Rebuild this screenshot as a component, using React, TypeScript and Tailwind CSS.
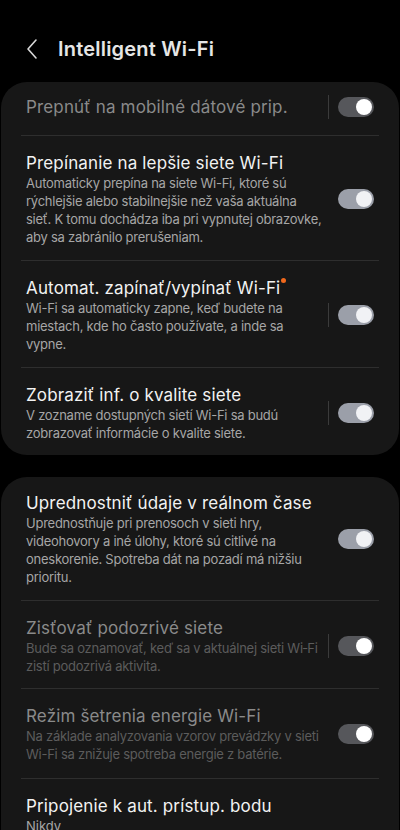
import React from "react";

type RowProps = {
  title: string;
  desc?: React.ReactNode;
  disabled?: boolean;
  toggle?: "on" | "dim" | "none";
  sep?: boolean;
  dot?: boolean;
  pt?: string;
  pb?: string;
  sub?: string;
};

function Toggle({ kind }: { kind: "on" | "dim" }) {
  return (
    <div
      className={
        "relative w-[36px] h-[20px] rounded-full " +
        (kind === "on" ? "bg-[#9b9fa9]" : "bg-[#56575b]")
      }
    >
      <div
        className={
          "absolute right-[2px] top-[2px] w-[16px] h-[16px] rounded-full " +
          (kind === "on" ? "bg-[#f1f2f5]" : "bg-white")
        }
      />
    </div>
  );
}

function Row({ title, desc, disabled, toggle = "none", sep, dot, pt = "pt-[16px]", pb = "pb-[14px]", sub }: RowProps) {
  return (
    <div className={"flex items-center pl-[25px] pr-[25px] " + pt + " " + pb}>
      <div className="flex-1 min-w-0 pr-[2px]">
        <div
          className={
            "text-[17px] leading-[22px] tracking-[0.15px] " +
            (disabled ? "text-[#8a8a8a]" : "text-[#f2f2f2]")
          }
        >
          {title}
          {dot && (
            <span className="inline-block w-[5px] h-[5px] rounded-full bg-[#f0681c] align-top ml-[1px] mt-[1px]" />
          )}
        </div>
        {desc && (
          <div
            className={
              "text-[13px] leading-[18px] tracking-[-0.25px] " +
              (disabled ? "text-[#5c5c5c]" : "text-[#a6a6a6]")
            }
          >
            {desc}
          </div>
        )}
        {sub && <div className="text-[13px] leading-[18px] text-[#a6a6a6]">{sub}</div>}
      </div>
      {toggle !== "none" && (
        <div className="flex items-center shrink-0">
          <div className={"w-px h-[24px] mr-[9px] " + (sep ? "bg-[#3b3b3b]" : "bg-transparent")} />
          <Toggle kind={toggle} />
        </div>
      )}
    </div>
  );
}

function Divider() {
  return <div className="mx-[20px] h-px bg-[#2e2e2e]" />;
}

export default function App() {
  return (
    <div
      className="w-[400px] h-[830px] bg-black overflow-hidden"
      style={{ fontFamily: "Inter, Roboto, 'Noto Sans', sans-serif" }}
    >
      <div className="h-[82px] flex items-start pl-[24px] pt-[36px]">
        <svg width="16" height="24" viewBox="0 0 16 24" className="mr-[18px] mt-[1px]">
          <path d="M12 3 L4 12 L12 21" fill="none" stroke="#d8d8d8" strokeWidth="1.6" strokeLinecap="round" strokeLinejoin="round" />
        </svg>
        <div className="text-[20px] leading-[26px] font-semibold text-[#e6e6e6] tracking-[0.2px]">Intelligent Wi-Fi</div>
      </div>

      <div className="bg-[#171717] rounded-[26px] mx-[1px]">
        <Row
          title="Prepnúť na mobilné dátové prip."
          disabled
          toggle="dim"
          sep
          pt="pt-[13px]"
          pb="pb-[16px]"
        />
        <Divider />
        <Row
          title="Prepínanie na lepšie siete Wi-Fi"
          desc={
            <>
              Automaticky prepína na siete Wi-Fi, ktoré sú rýchlejšie alebo stabilnejšie než vaša aktuálna
              <br />
              sieť. K tomu dochádza iba pri vypnutej obrazovke, aby sa zabránilo prerušeniam.
            </>
          }
          toggle="on"
        />
        <Divider />
        <Row
          title="Automat. zapínať/vypínať Wi-Fi"
          dot
          desc="Wi-Fi sa automaticky zapne, keď budete na miestach, kde ho často používate, a inde sa vypne."
          toggle="on"
          sep
        />
        <Divider />
        <Row
          title="Zobraziť inf. o kvalite siete"
          desc="V zozname dostupných sietí Wi-Fi sa budú zobrazovať informácie o kvalite siete."
          toggle="on"
          sep
          pb="pb-[13px]"
        />
      </div>

      <div className="h-[22px]" />

      <div className="bg-[#171717] rounded-[26px] mx-[1px] pb-[30px]">
        <Row
          title="Uprednostniť údaje v reálnom čase"
          desc="Uprednostňuje pri prenosoch v sieti hry, videohovory a iné úlohy, ktoré sú citlivé na oneskorenie. Spotreba dát na pozadí má nižšiu prioritu."
          toggle="on"
          pt="pt-[15px]"
        />
        <Divider />
        <Row
          title="Zisťovať podozrivé siete"
          desc="Bude sa oznamovať, keď sa v aktuálnej sieti Wi&#8209;Fi zistí podozrivá aktivita."
          disabled
          toggle="dim"
          sep
          pb="pb-[13px]"
        />
        <Divider />
        <Row
          title="Režim šetrenia energie Wi-Fi"
          desc="Na základe analyzovania vzorov prevádzky v sieti Wi-Fi sa znižuje spotreba energie z batérie."
          disabled
          toggle="dim"
          pb="pb-[15px]"
        />
        <Divider />
        <Row title="Pripojenie k aut. prístup. bodu" sub="Nikdy" />
      </div>
    </div>
  );
}
